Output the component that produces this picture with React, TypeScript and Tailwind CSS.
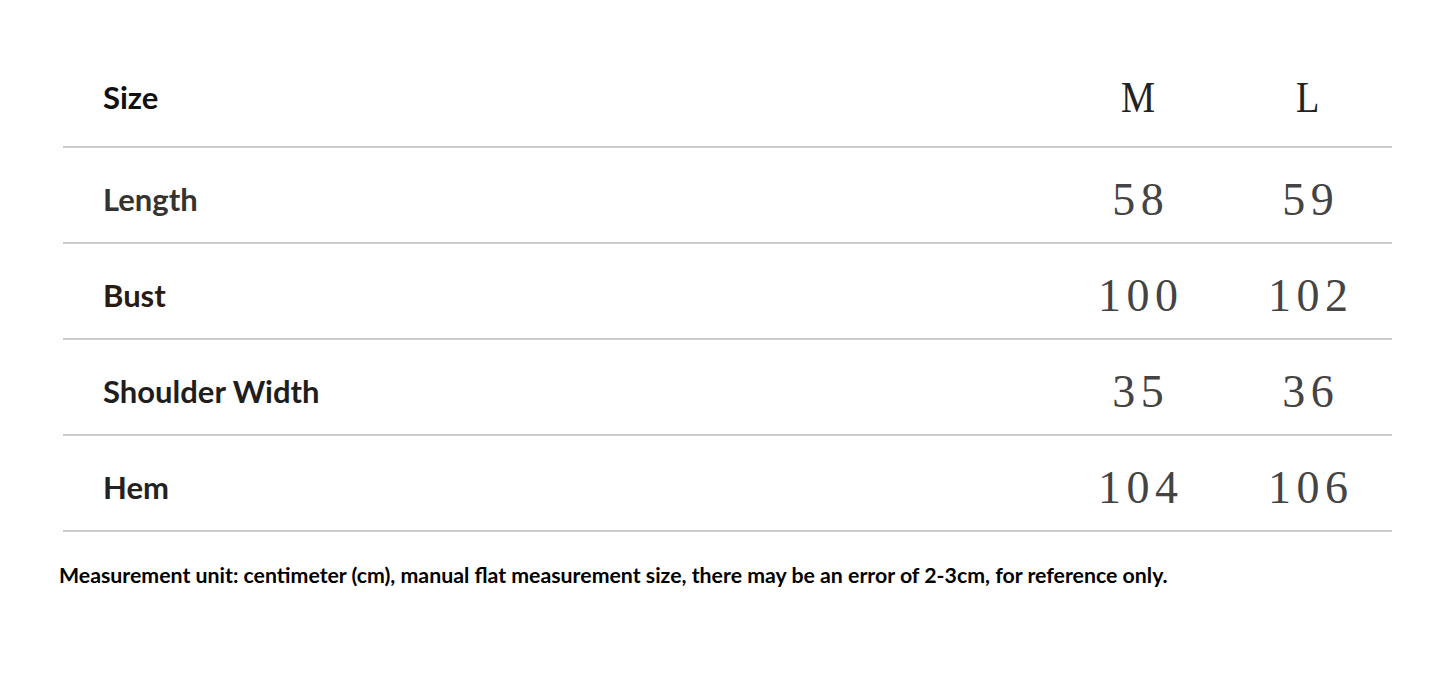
const rows = [
  { label: "Length", m: "58", l: "59", color: "text-[#35332f]" },
  { label: "Bust", m: "100", l: "102", color: "text-[#2a1a12]" },
  { label: "Shoulder Width", m: "35", l: "36", color: "text-[#1e1e1e]" },
  { label: "Hem", m: "104", l: "106", color: "text-[#222222]" },
]

function Num({ children }: { children: React.ReactNode }) {
  return (
    <div className="flex justify-center">
      <span className="inline-block font-['Liberation_Serif',serif] text-[46px] leading-none tracking-[5.5px] -mr-[5.5px] text-[#444444]">
        {children}
      </span>
    </div>
  )
}

export default function App() {
  return (
    <div className="min-h-[687px] w-[1445px] bg-white pt-[48px]">
      <div className="ml-[63px] w-[1329px]">
        <div className="grid h-[100px] grid-cols-[1fr_172px_168px] items-center border-b-2 border-[#cccccc]">
          <div className="pl-[40px] font-['Lato',sans-serif] text-[31px] font-bold text-[#111111]">Size</div>
          <div className="flex justify-center">
            <span className="inline-block scale-x-[0.85] font-['Liberation_Serif',serif] text-[45px] leading-none text-[#222222]">M</span>
          </div>
          <div className="flex justify-center">
            <span className="inline-block scale-x-[0.85] font-['Liberation_Serif',serif] text-[45px] leading-none text-[#222222]">L</span>
          </div>
        </div>
        {rows.map((r) => (
          <div
            key={r.label}
            className="grid h-[96px] grid-cols-[1fr_172px_168px] items-center border-b-2 border-[#cccccc] pt-[9px]"
          >
            <div className={`pl-[40px] font-['Lato',sans-serif] text-[31px] font-bold ${r.color}`}>{r.label}</div>
            <Num>{r.m}</Num>
            <Num>{r.l}</Num>
          </div>
        ))}
      </div>
      <p className="ml-[59px] mt-[28px] font-['Lato',sans-serif] text-[21.3px] font-bold text-black">
        Measurement unit: centimeter (cm), manual flat measurement size, there may be an error of 2-3cm, for reference only.
      </p>
    </div>
  )
}
